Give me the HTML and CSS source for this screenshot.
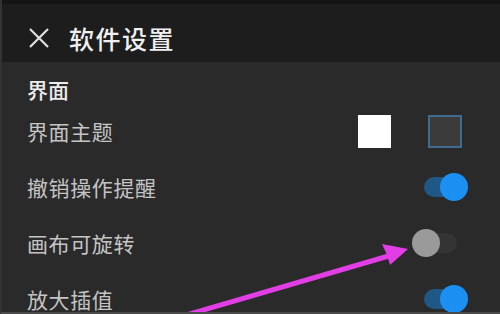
FILE: index.html
```html
<!DOCTYPE html>
<html lang="zh">
<head>
<meta charset="utf-8">
<link rel="stylesheet" href="styles.css">
</head>
<body>
<div class="screen">
  <header class="topbar">
    <svg class="close" width="22" height="22" viewBox="0 0 22 22"><path d="M2 2 L20 20 M20 2 L2 20" stroke="#e0e0e0" stroke-width="2.2" fill="none"/></svg>
    <h1 class="title">软件设置</h1>
  </header>
  <main class="content">
    <div class="section">界面</div>
    <div class="row">
      <span class="label">界面主题</span>
      <div class="swatches">
        <span class="swatch light"></span>
        <span class="swatch dark"></span>
      </div>
    </div>
    <div class="row">
      <span class="label">撤销操作提醒</span>
      <span class="toggle on"><span class="track"></span><span class="knob"></span></span>
    </div>
    <div class="row">
      <span class="label">画布可旋转</span>
      <span class="toggle"><span class="track"></span><span class="knob"></span></span>
    </div>
    <div class="row">
      <span class="label">放大插值</span>
      <span class="toggle on"><span class="track"></span><span class="knob"></span></span>
    </div>
  </main>
  <svg class="arrow" width="500" height="314" viewBox="0 0 500 314">
    <path d="M174 318 L390 255" stroke="#e23ee6" stroke-width="5" stroke-linecap="round" fill="none"/>
    <path d="M406 249 L380 244 L385 255 L388 265 Z" fill="#e23ee6"/>
  </svg>
</div>
</body>
</html>
```

FILE: styles.css
```css
* { box-sizing: border-box; margin: 0; padding: 0; }
html, body { width: 500px; height: 314px; overflow: hidden; background: #2a2a2a; }
body { font-family: "Noto Sans CJK SC", "Noto Sans", sans-serif; }
.screen { position: relative; width: 500px; height: 314px; background: #2a2a2a; border-left: 2px solid #333; border-bottom: 2px solid #4a4a4a; overflow: hidden; }
.topbar { height: 62px; background: #1d1d1d; display: flex; align-items: center; padding: 10px 0 0 26px; border-top: 4px solid #141414; }
.close { flex: none; }
.title { font-size: 25px; font-weight: 500; color: #f0f0f0; margin-left: 19px; letter-spacing: 1.5px; line-height: 30px; }
.content { display: flex; flex-direction: column; }
.section { height: 41px; padding: 13px 0 0 25px; font-size: 21px; line-height: 28px; font-weight: 500; color: #ececec; }
.row { height: 56px; display: flex; align-items: center; justify-content: space-between; padding: 0 32px 0 25px; }
.label { font-size: 21px; color: #c4c4c4; letter-spacing: 0.6px; }
.swatches { display: flex; gap: 37px; margin-right: 6px; }
.swatch { width: 33px; height: 33px; display: block; }
.swatch.light { background: #ffffff; }
.swatch.dark { width: 34px; background: #3b3b3b; border: 2px solid #3f6c8e; }
.toggle { position: relative; width: 56px; height: 28px; display: block; }
.toggle .track { position: absolute; left: 12px; top: 4px; width: 33px; height: 20px; border-radius: 10px; background: #343434; }
.toggle .knob { position: absolute; left: 0; top: 0; width: 28px; height: 28px; border-radius: 50%; background: #9a9a9a; }
.toggle.on .track { background: #1f5886; }
.toggle.on .knob { left: 28px; background: #1b8ff2; }
.arrow { position: absolute; left: 0; top: 0; pointer-events: none; }
```
